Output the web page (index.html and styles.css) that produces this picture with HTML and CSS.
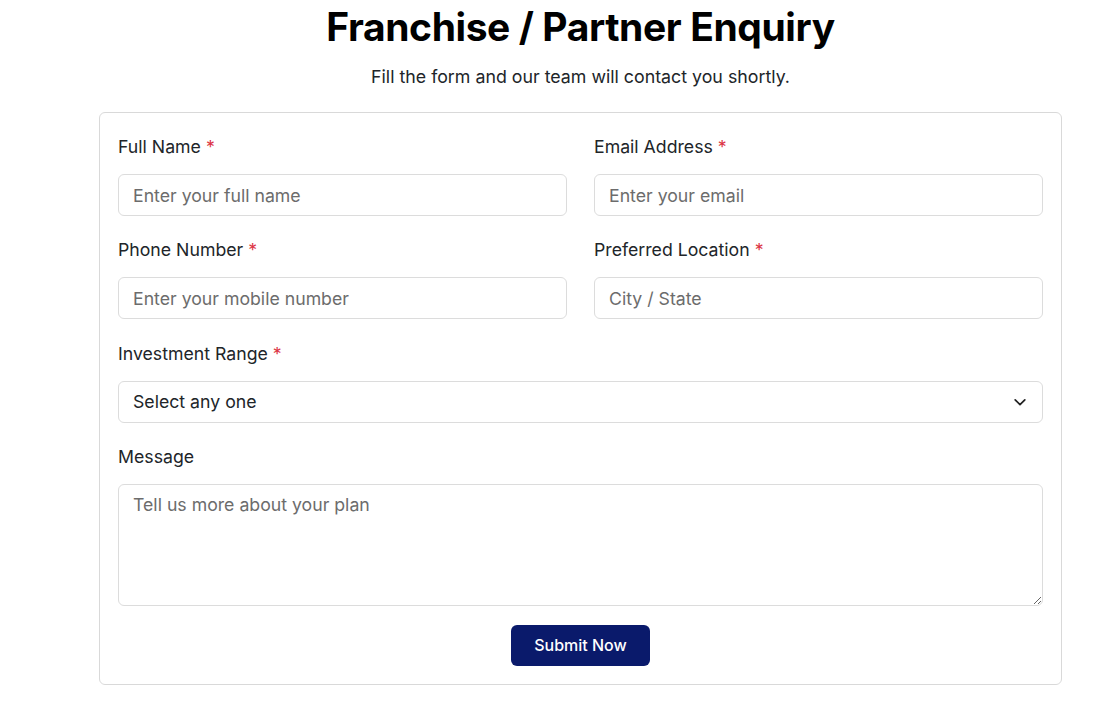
FILE: index.html
```html
<!DOCTYPE html>
<html lang="en">
<head>
<meta charset="utf-8">
<title>Franchise / Partner Enquiry</title>
<link rel="stylesheet" href="styles.css">
</head>
<body>
<main class="page">
  <h1 class="title">Franchise / Partner Enquiry</h1>
  <p class="subtitle">Fill the form and our team will contact you shortly.</p>
  <form class="card">
    <div class="row">
      <div class="field">
        <label class="label">Full Name <span class="req">*</span></label>
        <input class="control" type="text" placeholder="Enter your full name">
      </div>
      <div class="field">
        <label class="label">Email Address <span class="req">*</span></label>
        <input class="control" type="email" placeholder="Enter your email">
      </div>
    </div>
    <div class="row">
      <div class="field">
        <label class="label">Phone Number <span class="req">*</span></label>
        <input class="control" type="tel" placeholder="Enter your mobile number">
      </div>
      <div class="field">
        <label class="label">Preferred Location <span class="req">*</span></label>
        <input class="control" type="text" placeholder="City / State">
      </div>
    </div>
    <div class="field">
      <label class="label">Investment Range <span class="req">*</span></label>
      <div class="select-wrap">
        <select class="control select">
          <option>Select any one</option>
        </select>
        <svg class="chevron" width="14" height="14" viewBox="0 0 16 16" fill="none" stroke="#222" stroke-width="2" stroke-linecap="round" stroke-linejoin="round"><path d="M2.5 5.5 8 11l5.5-5.5"/></svg>
      </div>
    </div>
    <div class="field field-message">
      <label class="label">Message</label>
      <textarea class="control textarea" placeholder="Tell us more about your plan"></textarea>
    </div>
    <div class="actions">
      <button type="button" class="btn">Submit Now</button>
    </div>
  </form>
</main>
</body>
</html>
```

FILE: styles.css
```css
* { box-sizing: border-box; }

html, body {
  margin: 0;
  padding: 0;
  background: #ffffff;
}

body {
  font-family: Inter, "Noto Sans", Arial, sans-serif;
  color: #212529;
}

.page {
  padding: 0 45px 0 99px;
}

.title {
  margin: 3px 0 0;
  font-size: 39px;
  line-height: 48px;
  font-weight: 700;
  text-align: center;
  color: #000;
  letter-spacing: -0.4px;
}

.subtitle {
  margin: 13px 0 0;
  font-size: 17.8px;
  line-height: 25px;
  text-align: center;
  color: #212529;
}

.card {
  margin-top: 23px;
  border: 1px solid #d9d9d9;
  border-radius: 6px;
  padding: 22px 18px 18px;
}

.row {
  display: grid;
  grid-template-columns: 1fr 1fr;
  column-gap: 27px;
}

.field {
  display: flex;
  flex-direction: column;
  margin-bottom: 22.3px;
}

.label {
  font-size: 17.7px;
  line-height: 24px;
  margin-bottom: 15px;
  color: #212529;
}

.req {
  color: #dc3545;
}

.control {
  font-family: inherit;
  font-size: 17.7px;
  color: #212529;
  height: 42px;
  width: 100%;
  border: 1px solid #dcdcdc;
  border-radius: 6px;
  padding: 0 14px;
  background: #fff;
  outline: none;
}

.control::placeholder {
  color: #6c6c6c;
}

.select-wrap {
  position: relative;
}

.select {
  appearance: none;
  -webkit-appearance: none;
  color: #212529;
}

.chevron {
  position: absolute;
  right: 16px;
  top: 14px;
  pointer-events: none;
}

.textarea {
  height: 122px;
  padding: 8px 14px;
  line-height: 24px;
  resize: vertical;
}

.field-message {
  margin-bottom: 19px;
}

.actions {
  display: flex;
  justify-content: center;
}

.btn {
  font-family: inherit;
  font-size: 16px;
  font-weight: 500;
  color: #fff;
  background: #0a1a6b;
  border: none;
  border-radius: 6px;
  height: 41px;
  width: 139px;
  cursor: pointer;
}
```
